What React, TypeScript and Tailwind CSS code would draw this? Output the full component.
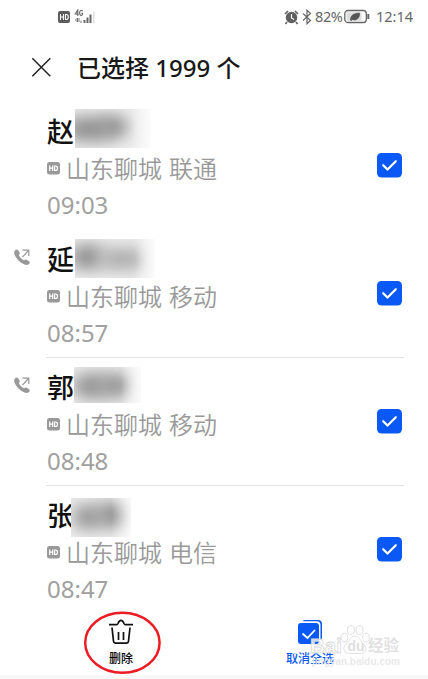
import React from "react";

type CallType = {
  name: string;
  carrier: string;
  time: string;
  outgoing?: boolean;
  maskClass: string;
  blobs: string[];
};

const calls: CallType[] = [
  {
    name: "赵",
    carrier: "联通",
    time: "09:03",
    maskClass: "left-[75px] top-[7px] w-[76px] h-[39px]",
    blobs: [
      "left-[-8px] top-[8px] w-[42px] h-[24px] bg-[#909090]",
      "left-[26px] top-[7px] w-[26px] h-[22px] bg-[#8c8c8c]",
    ],
  },
  {
    name: "延",
    carrier: "移动",
    time: "08:57",
    outgoing: true,
    maskClass: "left-[75px] top-[9px] w-[80px] h-[39px]",
    blobs: [
      "left-[-4px] top-[6px] w-[32px] h-[24px] bg-[#909090]",
      "left-[26px] top-[9px] w-[42px] h-[22px] bg-[#adadad]",
    ],
  },
  {
    name: "郭",
    carrier: "移动",
    time: "08:48",
    outgoing: true,
    maskClass: "left-[74px] top-[9px] w-[67px] h-[36px]",
    blobs: [
      "left-[0px] top-[7px] w-[33px] h-[24px] bg-[#939393]",
      "left-[26px] top-[7px] w-[30px] h-[23px] bg-[#939393]",
    ],
  },
  {
    name: "张",
    carrier: "电信",
    time: "08:47",
    maskClass: "left-[71px] top-[12px] w-[60px] h-[39px]",
    blobs: [
      "left-[2px] top-[7px] w-[30px] h-[24px] bg-[#989898]",
      "left-[28px] top-[5px] w-[30px] h-[24px] bg-[#8c8c8c]",
    ],
  },
];

const HdBadge = () => (
  <svg width="13" height="13" viewBox="0 0 13 13" className="shrink-0">
    <rect width="13" height="12.5" rx="2.5" fill="#999" />
    <path
      d="M2.7 3.5v5.6M5.7 3.5v5.6M2.7 6.2h3M7.6 4h1.2q1.7 0 1.7 2.2t-1.7 2.3H7.6z"
      fill="none"
      stroke="#fff"
      strokeWidth="1.2"
    />
  </svg>
);

const OutgoingCall = () => (
  <svg width="17" height="17" viewBox="0 0 17 17" fill="none">
    <path
      d="M1.2 1.2C2.4 0 3.7.3 4.5 1.7L5.6 3.8C6 4.7 5.6 5.3 4.9 6c.8 2.2 3 4.4 5.2 5.3.8-.8 1.5-1.1 2.4-.6l2.2 1.2c1.4.8 1.5 2 .3 3.2-1.1 1.1-2.6 1.3-4.5.5C5.800 13.600 2.400 10.100.6 5.800-.1 4 .1 2.300 1.200 1.200z"
      fill="#999"
    />
    <path d="M8.500 8l6-6.500M8.500 1.200h6.300V7" stroke="#999" strokeWidth="1.200" />
  </svg>
);

const Checkbox = () => (
  <svg width="25" height="25" viewBox="0 0 25 25" fill="none">
    <rect width="25" height="24.500" rx="4.500" fill="#0a59f7" />
    <path
      d="M6.200 12.200l4.300 4.300 8.300-8.300"
      stroke="#fff"
      strokeWidth="2.200"
      strokeLinecap="round"
      strokeLinejoin="round"
    />
  </svg>
);

const StatusBar = () => (
  <header className="flex h-[34px] items-center justify-between pl-[57px] pr-[14px] text-[#666]">
    <svg width="40" height="16" viewBox="0 0 40 16" fill="none">
      <rect x="1" y="2" width="12" height="12" rx="2" fill="#5c5c5c" />
      <path
        d="M3.500 5v6M6.500 5v6M3.500 8h3M8.500 5.500h1q1.800 0 1.800 2.500t-1.800 2.500h-1z"
        stroke="#fff"
        strokeWidth="1.100"
      />
      <path
        d="M20.800 7V1l-2.600 4h3.500M25.500 2.200q-.7-1-1.700-.7-1.200.3-1.200 2.400t1.300 2.500q1.700.2 1.700-2.100h-1.300"
        stroke="#666"
        strokeWidth="1.100"
      />
      <path d="M20.500 9l-2 2 2 2zM22 9v4M24 11.500V14" stroke="#777" />
      <path
        d="M27.500 14v-3M30.500 14V8.500M33.500 14V5.500"
        stroke="#666"
        strokeWidth="2"
      />
      <path d="M36.700 14V2.500" stroke="#ddd" strokeWidth="1.500" />
    </svg>

    <div className="flex items-center font-['Noto_Sans']">
      <svg
        width="15"
        height="16"
        viewBox="0 0 15 16"
        fill="none"
        className="mr-px"
      >
        <path
          d="M1 5l3-3M14 5l-3-3M3 13l-1.500 2M12 13l1.500 2"
          stroke="#666"
          strokeWidth="1.700"
        />
        <circle cx="7.500" cy="8.500" r="5.700" fill="#606060" />
        <path d="M7.500 5v4l2.500 1.500" stroke="#fff" strokeWidth="1.200" />
      </svg>
      <svg
        width="12"
        height="16"
        viewBox="0 0 12 16"
        fill="none"
        className="ml-px mr-px"
      >
        <path
          d="M2 4.500l7.500 7L6 14.800V1.200l3.500 3.300-7.500 7"
          stroke="#666"
          strokeWidth="1.200"
        />
      </svg>
      <span className="ml-px mr-px w-[28px] text-[14.5px] tracking-[-0.4px]">
        82%
      </span>
      <svg
        width="26"
        height="15"
        viewBox="0 0 26 15"
        fill="none"
        className="mr-[2px]"
      >
        <rect
          x=".8"
          y="1.500"
          width="21.500"
          height="12"
          rx="3"
          stroke="#666"
          strokeWidth="1.300"
        />
        <rect x="2.500" y="3.200" width="15" height="8.600" rx="1" fill="#dedede" />
        <path
          d="M6.500 11.500c0-5 2.500-7 9-7.500.5 5-3 8-7 6.500M7 12l4-4"
          fill="#555"
          stroke="#555"
          strokeWidth=".7"
        />
        <path d="M24.300 5v5" stroke="#666" strokeWidth="2" />
      </svg>
      <span className="ml-[4px] w-[38px] whitespace-nowrap text-[14.5px]">
        12:14
      </span>
    </div>
  </header>
);

const CallRow = ({ call, divider }: { call: CallType; divider: boolean }) => (
  <li className="relative flex h-[128px] pl-[14px] pr-[24px]">
    <div className="w-[32px] shrink-0 pt-[19px]">
      {call.outgoing && <OutgoingCall />}
    </div>
    <div
      className={
        divider
          ? "flex flex-1 border-b border-[#e3e3e3]"
          : "flex flex-1 border-b border-transparent"
      }
    >
      <div className="flex-1 whitespace-nowrap pl-px pt-[10px]">
        <h4 className="h-[39px] text-[27px] font-medium leading-[40px] text-[#111]">
          {call.name}
        </h4>
        <p className="flex h-[36px] items-center text-[24px] leading-[36px] text-[#999]">
          <HdBadge />
          <span className="ml-[6px] font-[350]">山东聊城</span>
          <span className="ml-[7px] font-[350]">{call.carrier}</span>
        </p>
        <p className="h-[36px] font-['Noto_Sans'] text-[24px] font-normal leading-[36px] text-[#a0a0a0]">
          {call.time}
        </p>
      </div>
      <div className="mr-[2px] pt-[51px]">
        <Checkbox />
      </div>
    </div>
    {/* hides the rest of the contact name */}
    <div
      className={`absolute overflow-hidden bg-[#eee] ${call.maskClass}`}
    >
      {call.blobs.map((blob) => (
        <div key={blob} className={`absolute rounded-lg blur-[8px] ${blob}`} />
      ))}
      <div className="absolute inset-y-0 right-0 w-[20px] bg-linear-to-r from-transparent to-white/80" />
    </div>
  </li>
);

const Watermark = () => (
  <svg
    width="100"
    height="48"
    viewBox="0 0 100 48"
    className="absolute left-[306px] top-[622px] overflow-visible"
  >
    <g fill="#fff" fillOpacity=".8" stroke="#d8d8d8" strokeWidth=".8">
      <text
        x="4"
        y="31"
        fontSize="21"
        fontWeight="700"
        fontFamily="Liberation Sans, sans-serif"
        textLength="32"
        lengthAdjust="spacingAndGlyphs"
      >
        Bai
      </text>
      <ellipse cx="38.500" cy="15.500" rx="3.300" ry="4.300" />
      <ellipse cx="45" cy="8" rx="3.500" ry="4.500" />
      <ellipse cx="53.500" cy="8" rx="3.500" ry="4.500" />
      <ellipse cx="60" cy="15.500" rx="3.300" ry="4.300" />
      <path d="M49 14c-4 0-5 4-8 7s-4 5-2.500 8 5 2.500 10.500 2.500 9 .5 10.500-2.500-.5-5-3-8-3.500-7-7.500-7z" />
      <text
        x="41.500"
        y="29"
        fontSize="14"
        fontWeight="700"
        fontFamily="Liberation Sans, sans-serif"
        fill="#d6d6d6"
        stroke="none"
      >
        du
      </text>
      <text
        x="62"
        y="29"
        fontSize="15.500"
        fontWeight="700"
        fontFamily="Noto Sans CJK SC, sans-serif"
        fill="#dadada"
        stroke="none"
      >
        经验
      </text>
    </g>
    <text
      x="6"
      y="43"
      fontSize="11"
      fontWeight="700"
      fontFamily="Liberation Sans, sans-serif"
      fill="#e6e6e6"
      fillOpacity=".9"
      textLength="88"
      lengthAdjust="spacingAndGlyphs"
    >
      jingyan.baidu.com
    </text>
  </svg>
);

const App = () => {
  return (
    <main className="relative flex h-[679px] w-[428px] flex-col overflow-hidden bg-white font-['Noto_Sans','Noto_Sans_CJK_SC',sans-serif]">
      <StatusBar />

      <div className="flex h-[69px] items-center pl-[31px]">
        <svg
          width="21"
          height="21"
          viewBox="0 0 21 21"
          fill="none"
          stroke="#222"
          strokeWidth="1.500"
        >
          <path d="M1.300 1.300l18 18M19.300 1.300l-18 18" />
        </svg>
        <h1 className="ml-[25px] whitespace-nowrap text-[24px] font-medium text-[#181818]">
          已选择 1999 个
        </h1>
      </div>

      <ul>
        {calls.map((call, index) => (
          <CallRow
            key={call.time}
            call={call}
            divider={index === 1 || index === 2}
          />
        ))}
      </ul>

      <nav className="flex h-[62px] pt-[4px] text-[12px] font-medium leading-[18px]">
        <button className="ml-[101px] flex w-[40px] flex-col items-center text-black">
          <svg
            width="26"
            height="27"
            viewBox="0 0 26 27"
            fill="none"
            stroke="#111"
            strokeWidth="1.700"
          >
            <path d="M1 6.700h7.500c.8 0 1.200-.5 1.500-1.200C10.700 3.500 11.500 2.300 13 2.300s2.300 1.200 3 3.200c.3.700.7 1.200 1.500 1.200H25" />
            <path d="M4 9.500l1.500 13.700q.3 2 2.200 2h10.600q1.900 0 2.200-2L22 9.500M10.500 14v8M15.500 14v8" />
          </svg>
          <span className="mt-[5px]">删除</span>
        </button>
        <button className="ml-[139px] flex w-[60px] flex-col items-center text-[#0a59f7]">
          <svg width="25" height="27" viewBox="0 0 25 27" fill="none">
            <path
              d="M4.500 3.300q1-1.300 2.800-1.300H20q4 0 4 4v13.500q0 2-1.500 3V7q0-3.700-3.700-3.700z"
              fill="#0a59f7"
            />
            <rect x="0" y="5" width="21" height="21" rx="3" fill="#0a59f7" />
            <path
              d="M5 16l4.500 4 7-7.500"
              stroke="#fff"
              strokeWidth="1.800"
              strokeLinecap="round"
            />
          </svg>
          <span className="mt-[5px]">取消全选</span>
        </button>
      </nav>
      <div className="h-[4px] bg-[#f9f9f9]" />

      <Watermark />
      <svg
        width="80"
        height="66"
        viewBox="0 0 80 66"
        fill="none"
        className="absolute left-[82px] top-[610px]"
      >
        <ellipse
          cx="40.400"
          cy="32.800"
          rx="37.200"
          ry="30"
          stroke="#ec1c24"
          strokeWidth="2.500"
        />
      </svg>
    </main>
  );
};

export default App;
